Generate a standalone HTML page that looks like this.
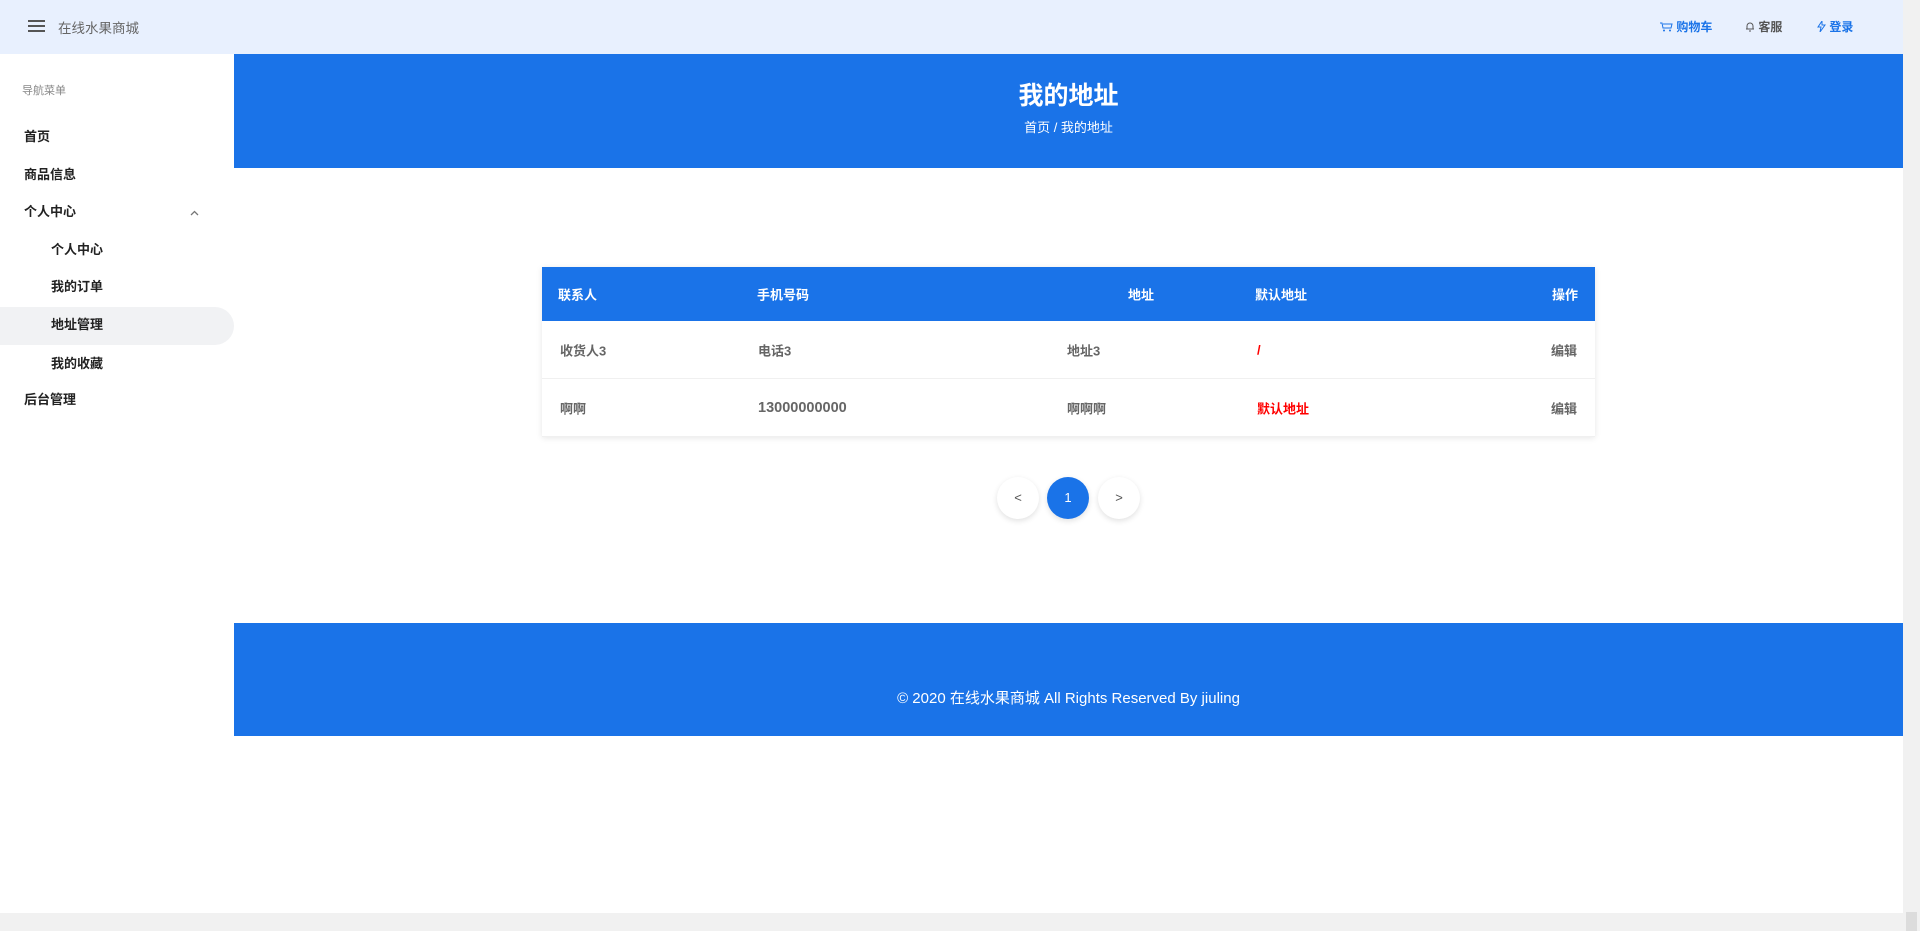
<!DOCTYPE html>
<html><head><meta charset="utf-8"><style>
*{margin:0;padding:0;box-sizing:border-box}
body{width:1920px;height:931px;overflow:hidden;position:relative;background:#fff;font-family:"Liberation Sans","Noto Sans CJK SC",sans-serif;}
.top{position:absolute;left:0;top:0;width:1903px;height:54px;background:#e8f0fe}
.abs{position:absolute;white-space:nowrap}
.side .it{position:absolute;font-size:13px;font-weight:bold;color:#222;line-height:20px}
.hdr{position:absolute;left:234px;top:54px;width:1669px;height:114px;background:#1a73e8;color:#fff;text-align:center}
.tbl{position:absolute;left:542px;top:267px;width:1053px;box-shadow:0 1px 6px rgba(0,0,0,.1)}
.th{height:54px;background:#1a73e8;position:relative;color:#fff;font-size:13px;font-weight:bold}
.tr{height:58px;position:relative;color:#666;font-size:13px;font-weight:bold;border-bottom:1px solid #f0f0f0;background:#fff}
.c{position:absolute;top:50%;transform:translateY(-50%)}
.pg{position:absolute;top:477px;width:42px;height:42px;border-radius:50%;background:#fff;box-shadow:0 2px 6px rgba(0,0,0,.12);text-align:center;line-height:42px;font-size:13px;color:#555}
.foot{position:absolute;left:234px;top:623px;width:1669px;height:113px;background:#1a73e8;color:#fff;text-align:center;font-size:15px}
</style></head><body>
<div class="top">
  <div class="abs" style="left:28px;top:20px;width:17px;height:2px;background:#555;box-shadow:0 5px 0 #555,0 10px 0 #555"></div>
  <div class="abs" style="left:58px;top:17px;font-size:13.5px;color:#666">在线水果商城</div>
  <div class="abs" style="left:1660px;top:18px;font-size:12px;color:#1a73e8;font-weight:bold">
    <svg width="13" height="11" viewBox="0 0 13 11" style="vertical-align:-1px"><path d="M0 2h2l1 5h8l1-4H3" fill="none" stroke="#1a73e8" stroke-width="1"/><circle cx="4" cy="9.5" r="1" fill="#1a73e8"/><circle cx="10" cy="9.5" r="1" fill="#1a73e8"/></svg> 购物车</div>
  <div class="abs" style="left:1745px;top:18px;font-size:12px;color:#555;font-weight:bold">
    <svg width="10" height="11" viewBox="0 0 10 11" style="vertical-align:-1px"><path d="M2 8V5a3 3 0 016 0v3zM1 8h8M4 10h2" fill="none" stroke="#555" stroke-width="1"/></svg> 客服</div>
  <div class="abs" style="left:1817px;top:18px;font-size:12px;color:#1a73e8;font-weight:bold">
    <svg width="9" height="11" viewBox="0 0 9 11" style="vertical-align:-1px"><path d="M5 0L1 6h3l-1 5 5-7H5z" fill="none" stroke="#1a73e8" stroke-width="1"/></svg> 登录</div>
</div>
<div class="side">
  <div class="abs" style="left:22px;top:82px;font-size:11px;color:#888">导航菜单</div>
  <div class="abs" style="left:0;top:307px;width:234px;height:38px;background:#f1f2f4;border-radius:0 19px 19px 0"></div>
  <div class="it" style="left:24px;top:127px">首页</div>
  <div class="it" style="left:24px;top:165px">商品信息</div>
  <div class="it" style="left:24px;top:202px">个人中心</div>
  <svg class="abs" style="left:190px;top:210px" width="9" height="6" viewBox="0 0 9 6"><path d="M1 5l3.5-3.5L8 5" fill="none" stroke="#777" stroke-width="1.3"/></svg>
  <div class="it" style="left:51px;top:240px">个人中心</div>
  <div class="it" style="left:51px;top:277px">我的订单</div>
  <div class="it" style="left:51px;top:315px">地址管理</div>
  <div class="it" style="left:51px;top:354px">我的收藏</div>
  <div class="it" style="left:24px;top:390px">后台管理</div>
</div>
<div class="hdr">
  <div style="position:absolute;left:0;right:0;top:22px;font-size:25px;font-weight:bold">我的地址</div>
  <div style="position:absolute;left:0;right:0;top:63px;font-size:13px">首页 / 我的地址</div>
</div>
<div class="tbl">
  <div class="th"><span class="c" style="left:16px">联系人</span><span class="c" style="left:215px">手机号码</span><span class="c" style="right:441px">地址</span><span class="c" style="left:713px">默认地址</span><span class="c" style="right:17px">操作</span></div>
  <div class="tr"><span class="c" style="left:18px">收货人3</span><span class="c" style="left:216px">电话3</span><span class="c" style="left:525px">地址3</span><span class="c" style="left:715px;color:#f00">/</span><span class="c" style="right:18px">编辑</span></div>
  <div class="tr"><span class="c" style="left:18px">啊啊</span><span class="c" style="left:216px;font-size:14.5px">13000000000</span><span class="c" style="left:525px">啊啊啊</span><span class="c" style="left:715px;color:#f00">默认地址</span><span class="c" style="right:18px">编辑</span></div>
</div>
<div class="pg" style="left:997px">&lt;</div>
<div class="pg" style="left:1047px;background:#1a73e8;color:#fff">1</div>
<div class="pg" style="left:1098px">&gt;</div>
<div class="foot"><div style="position:absolute;left:0;right:0;top:64px">© 2020 在线水果商城 All Rights Reserved By jiuling</div></div>
<div class="abs" style="left:1903px;top:0;width:17px;height:931px;background:#f1f1f1"></div>
<div class="abs" style="left:0;top:913px;width:1903px;height:18px;background:#f1f1f1"></div>
<div class="abs" style="left:1906px;top:912px;width:11px;height:19px;background:#dcdcdc"></div>
</body></html>
